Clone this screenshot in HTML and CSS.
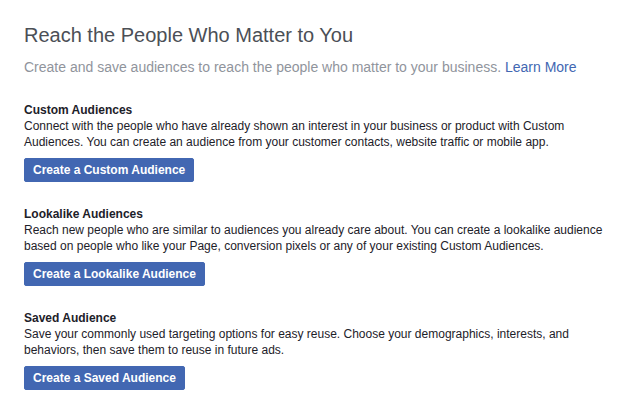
FILE: index.html
```html
<!DOCTYPE html>
<html>
	<head>
		<meta charset="utf-8" />
		<title>Audiences</title>
		<link rel="stylesheet" href="styles.css">
	</head>
	<body>
		<div class="wrap">
			<h1 class="title">Reach the People Who Matter to You</h1>
			<p class="subtitle">Create and save audiences to reach the people who matter to your business. <a href="#" class="learn">Learn More</a></p>

			<div class="section">
				<h2 class="section-title">Custom Audiences</h2>
				<p class="section-text">Connect with the people who have already shown an interest in your business or product with Custom Audiences. You can create an audience from your customer contacts, website traffic or mobile app.</p>
				<button class="btn">Create a Custom Audience</button>
			</div>

			<div class="section">
				<h2 class="section-title">Lookalike Audiences</h2>
				<p class="section-text">Reach new people who are similar to audiences you already care about. You can create a lookalike audience based on people who like your Page, conversion pixels or any of your existing Custom Audiences.</p>
				<button class="btn">Create a Lookalike Audience</button>
			</div>

			<div class="section">
				<h2 class="section-title">Saved Audience</h2>
				<p class="section-text">Save your commonly used targeting options for easy reuse. Choose your demographics, interests, and behaviors, then save them to reuse in future ads.</p>
				<button class="btn">Create a Saved Audience</button>
			</div>
		</div>
	</body>
</html>
```

FILE: styles.css
```css
body {
	margin: 0;
	background-color: #fff;
	font-family: "Liberation Sans", Arial, Helvetica, sans-serif;
	color: #1d2129;
}
.wrap {
	padding: 23px 12px 0 24px;
}
.title {
	margin: 0;
	font-size: 20px;
	line-height: 24px;
	font-weight: normal;
	color: #4b4f56;
}
.subtitle {
	margin: 11px 0 26px;
	font-size: 14px;
	line-height: 18px;
	color: #90949c;
}
.learn {
	color: #4267b2;
	text-decoration: none;
}
.section {
	margin-bottom: 24px;
}
.section-title {
	margin: 0;
	font-size: 12px;
	line-height: 16px;
	font-weight: bold;
	color: #1d2129;
}
.section-text {
	margin: 0 0 8px;
	font-size: 12px;
	line-height: 16px;
}
.btn {
	display: block;
	height: 24px;
	margin: 0;
	padding: 0 8px;
	border: 1px solid #4267b2;
	border-radius: 2px;
	background-color: #4267b2;
	color: #fff;
	font-family: inherit;
	font-size: 12px;
	font-weight: bold;
	line-height: 22px;
	cursor: pointer;
}
```
